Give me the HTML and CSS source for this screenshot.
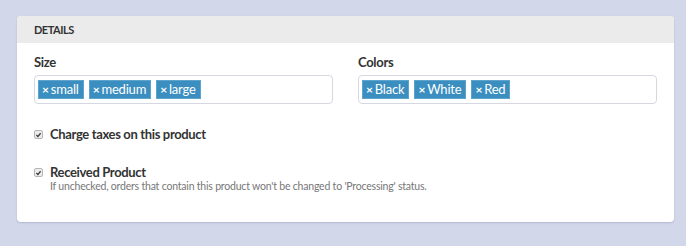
FILE: index.html
```html
<!DOCTYPE html>
<html>
<head>
<meta charset="utf-8">
<link rel="stylesheet" href="styles.css">
</head>
<body>
<div class="card">
  <div class="card-header">DETAILS</div>
  <div class="card-body">
    <div class="fields">
      <div class="field">
        <div class="label">Size</div>
        <div class="tag-input">
          <span class="tag"><span class="x">×</span>small</span>
          <span class="tag"><span class="x">×</span>medium</span>
          <span class="tag"><span class="x">×</span>large</span>
        </div>
      </div>
      <div class="field">
        <div class="label">Colors</div>
        <div class="tag-input">
          <span class="tag"><span class="x">×</span>Black</span>
          <span class="tag"><span class="x">×</span>White</span>
          <span class="tag"><span class="x">×</span>Red</span>
        </div>
      </div>
    </div>
    <div class="check-row first">
      <span class="cb"><svg width="8" height="8" viewBox="0 0 8 8"><path d="M1.6 4.1 L3.3 5.8 L6.4 2" fill="none" stroke="#3a3a3a" stroke-width="1.5"/></svg></span>
      <div class="check-text">
        <div class="check-label">Charge taxes on this product</div>
      </div>
    </div>
    <div class="check-row">
      <span class="cb"><svg width="8" height="8" viewBox="0 0 8 8"><path d="M1.6 4.1 L3.3 5.8 L6.4 2" fill="none" stroke="#3a3a3a" stroke-width="1.5"/></svg></span>
      <div class="check-text">
        <div class="check-label">Received Product</div>
        <div class="help">If unchecked, orders that contain this product won't be changed to 'Processing' status.</div>
      </div>
    </div>
  </div>
</div>
</body>
</html>
```
FILE: styles.css
```css
html, body {
  margin: 0;
  padding: 0;
}
body {
  background: #d3d7ea;
  font-family: Lato, "Open Sans", sans-serif;
  color: #333;
  padding: 16px 12px 24px 17px;
  width: 686px;
  height: 246px;
  box-sizing: border-box;
}
.card {
  width: 657px;
  height: 206px;
  background: #fff;
  border-radius: 4px;
  box-shadow: 0 1px 2px rgba(80, 90, 130, 0.25);
  overflow: hidden;
  box-sizing: border-box;
}
.card-header {
  height: 27px;
  background: #ebebeb;
  padding-left: 17px;
  font-size: 11px;
  font-weight: 700;
  line-height: 28px;
  color: #333;
  letter-spacing: -0.5px;
}
.card-body {
  padding: 11px 17px 0 17px;
}
.fields {
  display: grid;
  grid-template-columns: 299px 299px;
  column-gap: 25px;
}
.label {
  font-size: 13px;
  font-weight: 700;
  line-height: 16px;
  color: #333;
  margin-bottom: 5px;
  letter-spacing: -0.3px;
}
.tag-input {
  height: 29px;
  box-sizing: border-box;
  border: 1px solid #d5d8e1;
  border-radius: 4px;
  padding: 4px 3px;
  display: flex;
  gap: 5px;
}
.tag {
  height: 19px;
  box-sizing: border-box;
  background: #3a8ec0;
  border: 1px solid #5ea3cc;
  color: #fff;
  font-size: 13px;
  line-height: 17px;
  padding: 0 4px 0 3px;
  display: inline-flex;
  align-items: center;
  letter-spacing: -0.2px;
}
.x {
  font-size: 12px;
  font-weight: 700;
  margin-right: 2px;
}
.check-row {
  display: flex;
  align-items: flex-start;
  margin-top: 22px;
}
.cb {
  width: 9px;
  height: 9px;
  box-sizing: border-box;
  border: 1px solid #b5b5b5;
  border-radius: 2px;
  background: #ececec;
  margin-top: 4px;
  margin-right: 7px;
  display: flex;
  align-items: center;
  justify-content: center;
}
.cb svg {
  display: block;
}
.check-label {
  font-size: 13px;
  font-weight: 700;
  line-height: 16px;
  color: #333;
  letter-spacing: -0.35px;
}
.help {
  font-size: 10.5px;
  line-height: 14px;
  color: #777;
  margin-top: -1px;
  letter-spacing: -0.2px;
}
```
